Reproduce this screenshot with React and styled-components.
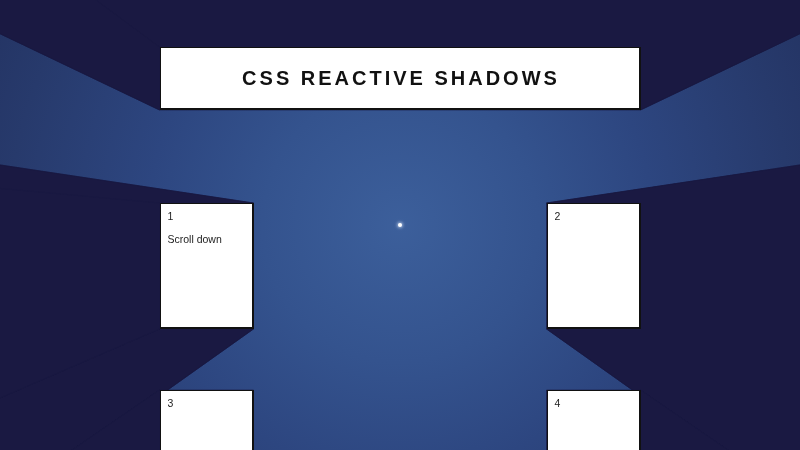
import React, { useLayoutEffect, useRef, useState, useCallback } from "react";
import styled, { createGlobalStyle } from "styled-components";

const SHADOW = "#1a1942";

const Global = createGlobalStyle`
  html {
    scrollbar-width: none;
  }
  html::-webkit-scrollbar { display: none; }
  body {
    margin: 0;
    min-height: 100vh;
    font-family: "Liberation Sans", Arial, sans-serif;
    background: radial-gradient(circle at 50% 50%, #3c5f9b 0%, #34538e 30%, #2d4680 55%, #273a6c 85%, #243464 100%) fixed;
  }
`;

const ShadowLayer = styled.svg`
  position: fixed;
  inset: 0;
  width: 100vw;
  height: 100vh;
  z-index: 0;
  pointer-events: none;
`;

const Light = styled.div`
  position: fixed;
  left: 50%;
  top: 50%;
  width: 4px;
  height: 4px;
  margin: -2px 0 0 -2px;
  border-radius: 50%;
  background: #fff;
  box-shadow: 0 0 3px 1px rgba(220, 235, 255, 0.6);
  z-index: 0;
`;

const Page = styled.main`
  position: relative;
  z-index: 1;
  width: 481px;
  margin: 0 auto;
  padding: 47px 0 80px;
`;

const Header = styled.header`
  height: 63px;
  box-sizing: border-box;
  border: 2px solid #111;
  border-width: 1.5px 2px 2px 1.5px;
  background: #fff;
  display: flex;
  align-items: center;
  justify-content: center;
  margin-bottom: 93px;
`;

const Title = styled.h1`
  margin: 0;
  font-size: 20px;
  font-weight: 700;
  letter-spacing: 3px;
  color: #111;
  padding-left: 3px;
`;

const Grid = styled.section`
  display: grid;
  grid-template-columns: 94px 94px;
  justify-content: space-between;
  row-gap: 61px;
`;

const Card = styled.div`
  height: 126px;
  box-sizing: border-box;
  border: 1px solid #111;
  border-width: 1px 2px 2px 1px;
  background: #fff;
  padding: 6px 7px;
  font-size: 10.5px;
  color: #222;
  line-height: 13px;
`;

const Note = styled.p`
  margin: 10px 0 0;
`;

function shadowQuads(rect, lx, ly, far) {
  const pts = [
    [rect.left, rect.top],
    [rect.right, rect.top],
    [rect.right, rect.bottom],
    [rect.left, rect.bottom],
  ];
  const proj = ([x, y]) => [x + (x - lx) * far, y + (y - ly) * far];
  return pts.map((p, i) => {
    const q = pts[(i + 1) % 4];
    return [p, q, proj(q), proj(p)]
      .map(([x, y]) => `${x.toFixed(1)},${y.toFixed(1)}`)
      .join(" ");
  });
}

const cards = [
  { id: 1, note: "Scroll down" },
  { id: 2 },
  { id: 3 },
  { id: 4 },
];

export default function App() {
  const refs = useRef([]);
  const [polys, setPolys] = useState([]);

  const update = useCallback(() => {
    const lx = window.innerWidth / 2;
    const ly = window.innerHeight / 2;
    const next = [];
    refs.current.forEach((el) => {
      if (!el) return;
      next.push(...shadowQuads(el.getBoundingClientRect(), lx, ly, 60));
    });
    setPolys(next);
  }, []);

  useLayoutEffect(() => {
    update();
    window.addEventListener("scroll", update, { passive: true });
    window.addEventListener("resize", update);
    return () => {
      window.removeEventListener("scroll", update);
      window.removeEventListener("resize", update);
    };
  }, [update]);

  return (
    <>
      <Global />
      <ShadowLayer>
        {polys.map((p, i) => (
          <polygon key={i} points={p} fill={SHADOW} stroke={SHADOW} strokeWidth="0.6" />
        ))}
      </ShadowLayer>
      <Light />
      <Page>
        <Header ref={(el) => (refs.current[0] = el)}>
          <Title>CSS REACTIVE SHADOWS</Title>
        </Header>
        <Grid>
          {cards.map((c, i) => (
            <Card key={c.id} ref={(el) => (refs.current[i + 1] = el)}>
              {c.id}
              {c.note && <Note>{c.note}</Note>}
            </Card>
          ))}
        </Grid>
      </Page>
    </>
  );
}
